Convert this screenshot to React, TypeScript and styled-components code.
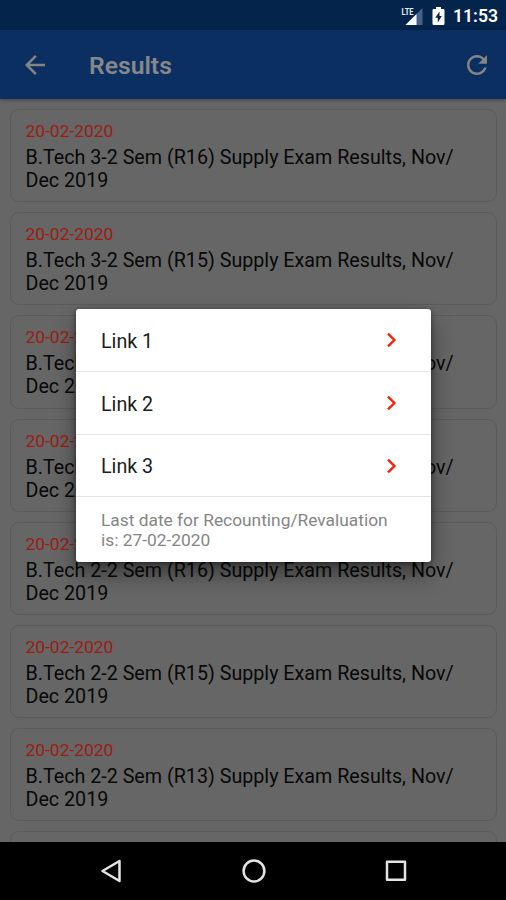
import React from 'react';
import styled, { createGlobalStyle } from 'styled-components';

const Global = createGlobalStyle`
  * { box-sizing: border-box; }
  body { margin: 0; background: #000; font-family: Roboto, "Liberation Sans", sans-serif; }
`;

const Screen = styled.div`
  position: relative;
  width: 506px;
  height: 900px;
  display: flex;
  flex-direction: column;
  overflow: hidden;
`;

const StatusBar = styled.header`
  height: 30px;
  flex: none;
  display: flex;
  align-items: center;
  justify-content: flex-end;
  padding: 1px 9px 0 0;
  background: #04244b;
  color: #fff;
`;

const Clock = styled.span`
  width: 44px;
  margin-left: 8px;
  font-size: 17.6px;
  font-weight: 600;
  line-height: 30px;
  white-space: nowrap;
`;

const SignalIcon = styled.svg`
  width: 22px;
  height: 20px;
  margin-right: 9px;
`;

const NetworkLabel = styled.text`
  font-size: 9.5px;
  font-weight: 700;
  fill: #e8edf4;
`;

const BatteryIcon = styled.svg`
  width: 13px;
  height: 20px;
`;

const AppBar = styled.div`
  position: relative;
  z-index: 1;
  height: 69px;
  flex: none;
  display: flex;
  align-items: center;
  padding: 0 14px 0 20px;
  background: #0a2f60;
  box-shadow: 0 1px 4px rgba(0, 0, 0, 0.35);
`;

const BarIcon = styled.svg`
  width: 30px;
  height: 30px;
  flex: none;
  fill: #858585;
`;

const Title = styled.h1`
  flex: 1;
  margin: 2px 0 0 39px;
  font-size: 24.7px;
  font-weight: 600;
  line-height: 30px;
  color: #85878a;
`;

const List = styled.main`
  flex: 1;
  min-height: 0;
  display: flex;
  flex-direction: column;
  gap: 10px;
  padding: 10px 9px 0 10px;
  overflow: hidden;
  background: #666;
`;

const Card = styled.article`
  height: 93.2px;
  flex: none;
  padding: 10px 15px 0 14.5px;
  border: 1px solid #5b5b5b;
  border-radius: 9px;
`;

const CardDate = styled.div`
  font-size: 17.4px;
  line-height: 22px;
  color: #9c1c12;
`;

const CardTitle = styled.div`
  margin-top: 4px;
  font-size: 19.7px;
  line-height: 23px;
  color: #080808;
  white-space: pre-line;
`;

const NavBar = styled.nav`
  height: 58px;
  flex: none;
  display: flex;
  align-items: center;
  justify-content: center;
  gap: 114px;
  padding-left: 1px;
  background: #000;
`;

const NavIcon = styled.svg`
  width: 28px;
  height: 28px;
  fill: none;
  stroke: #e4e4e4;
  stroke-width: 2.5;
`;

const Dialog = styled.section`
  position: absolute;
  z-index: 2;
  top: 309px;
  left: 76px;
  width: 355px;
  height: 253px;
  border-radius: 3px;
  background: #fff;
  box-shadow: 0 12px 22px rgba(0, 0, 0, 0.42), 0 1px 5px rgba(0, 0, 0, 0.45);
`;

const LinkRow = styled.div`
  height: 62.8px;
  display: flex;
  align-items: center;
  justify-content: space-between;
  padding: 3px 32px 0 25px;
  border-bottom: 1.5px solid #e6e6e6;
  font-size: 19.7px;
  color: #1c1c1c;
`;

const Chevron = styled.svg`
  width: 16px;
  height: 18px;
  margin-bottom: 2px;
  fill: none;
  stroke: #f5210d;
  stroke-width: 2.4;
`;

const Note = styled.p`
  margin: 13px 0 0 25px;
  font-size: 17.35px;
  line-height: 20px;
  color: #858585;
  white-space: pre-line;
`;

const exams = ['3-2 Sem (R16)', '3-2 Sem (R15)', '3-2 Sem (R13)', '2-2 Sem (R19)', '2-2 Sem (R16)', '2-2 Sem (R15)', '2-2 Sem (R13)'];
const links = ['Link 1', 'Link 2', 'Link 3'];

export default function App() {
  return (
    <Screen>
      <Global />
      <StatusBar>
        <SignalIcon viewBox="0 0 22 20">
          <path d="M21.5 2v17H4.5Z" fill="#46618a" />
          <path d="M15.5 8v11H4.5Z" fill="#fff" />
          <NetworkLabel x="0.5" y="8.8" textLength="12" lengthAdjust="spacingAndGlyphs">LTE</NetworkLabel>
        </SignalIcon>
        <BatteryIcon viewBox="0 0 13 20">
          <path d="M4 1h5v2h2.2q1.3 0 1.3 1.3v13.4q0 1.3-1.3 1.3H1.8Q.5 19 .5 17.7V4.3Q.5 3 1.8 3H4Z" fill="#fff" />
          <path d="M7.5 5.5 3.3 11.7h2.5v4.8l4-6.4H7.5Z" fill="#04244b" />
        </BatteryIcon>
        <Clock>11:53</Clock>
      </StatusBar>
      <AppBar>
        <BarIcon viewBox="0 0 24 24">
          <path d="M20 11H7.83l5.59-5.59L12 4l-8 8 8 8 1.41-1.41L7.83 13H20v-2z" />
        </BarIcon>
        <Title>Results</Title>
        <BarIcon viewBox="0 0 24 24">
          <path d="M17.65 6.35C16.2 4.9 14.21 4 12 4c-4.42 0-7.99 3.58-7.99 8s3.57 8 7.99 8c3.73 0 6.84-2.55 7.73-6h-2.08c-.82 2.33-3.04 4-5.65 4-3.31 0-6-2.69-6-6s2.69-6 6-6c1.66 0 3.14.69 4.22 1.78L13 11h7V4l-2.35 2.35z" />
        </BarIcon>
      </AppBar>
      <List>
        {exams.map((exam) => (
          <Card key={exam}>
            <CardDate>20-02-2020</CardDate>
            <CardTitle>{`B.Tech ${exam} Supply Exam Results, Nov/\nDec 2019`}</CardTitle>
          </Card>
        ))}
        <Card />
      </List>
      <NavBar>
        <NavIcon viewBox="0 0 28 28"><path d="M21.5 4v20L4.5 14Z" strokeLinejoin="round" /></NavIcon>
        <NavIcon viewBox="0 0 28 28"><circle cx="14" cy="14" r="10.4" /></NavIcon>
        <NavIcon viewBox="0 0 28 28"><rect x="5" y="4.8" width="18" height="18" strokeLinejoin="round" /></NavIcon>
      </NavBar>
      <Dialog role="dialog">
        {links.map((link) => (
          <LinkRow key={link}>
            {link}
            <Chevron viewBox="0 0 16 18"><path d="m5 2.6 6.4 6.4L5 15.4" /></Chevron>
          </LinkRow>
        ))}
        <Note>{'Last date for Recounting/Revaluation\nis: 27-02-2020'}</Note>
      </Dialog>
    </Screen>
  );
}
